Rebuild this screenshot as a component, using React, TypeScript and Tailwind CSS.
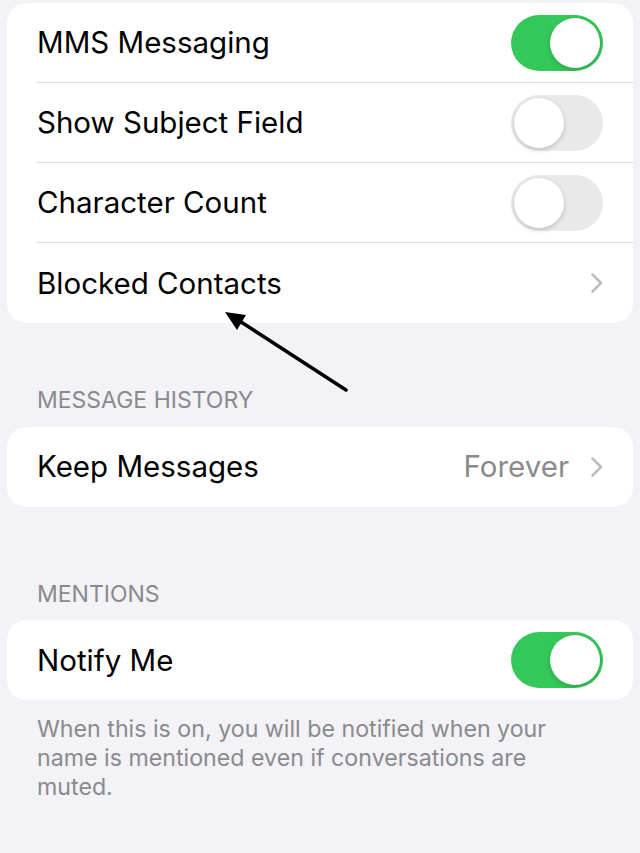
function Toggle({ on }: { on: boolean }) {
  return (
    <div
      className={`flex h-[56px] w-[92px] items-center rounded-full p-[3px] ${
        on ? 'justify-end bg-[#34c759]' : 'justify-start bg-[#e9e9ea]'
      }`}
    >
      <div className="h-[50px] w-[50px] rounded-full bg-white shadow-[0_2px_5px_rgba(0,0,0,0.18)]" />
    </div>
  );
}

function Row({
  label,
  last,
  children,
}: {
  label: string;
  last?: boolean;
  children?: React.ReactNode;
}) {
  return (
    <div className="pl-[30px]">
      <div
        className={`flex h-[80px] items-center justify-between pr-[30px] ${
          last ? '' : 'border-b border-[#dcdce0]'
        }`}
      >
        <span className="text-[29.5px] text-black">{label}</span>
        {children}
      </div>
    </div>
  );
}

const Chevron = () => (
  <svg width="14" height="22" viewBox="0 0 14 22" className="mr-[-1px]">
    <path d="M2.5 2.5 L11 11 L2.5 19.5" fill="none" stroke="#bdbdc1" strokeWidth="2.6" strokeLinecap="round" strokeLinejoin="round" />
  </svg>
);

export default function App() {
  return (
    <div
      className="relative min-h-[853px] bg-[#f2f2f7] px-[7px] pt-[3px]"
      style={{ fontFamily: 'Inter, "Noto Sans", sans-serif' }}
    >
      <div className="overflow-hidden rounded-[20px] bg-white">
        <Row label="MMS Messaging">
          <Toggle on />
        </Row>
        <Row label="Show Subject Field">
          <Toggle on={false} />
        </Row>
        <Row label="Character Count">
          <Toggle on={false} />
        </Row>
        <Row label="Blocked Contacts" last>
          <Chevron />
        </Row>
      </div>

      <div className="mt-[60px] px-[30px] pb-[9px] text-[23px] text-[#8a8a8e]">MESSAGE HISTORY</div>
      <div className="overflow-hidden rounded-[20px] bg-white">
        <Row label="Keep Messages" last>
          <div className="flex items-center gap-[21px]">
            <span className="text-[29.5px] text-[#8a8a8e]">Forever</span>
            <Chevron />
          </div>
        </Row>
      </div>

      <div className="mt-[70px] px-[30px] pb-[9px] text-[23px] text-[#8a8a8e]">MENTIONS</div>
      <div className="overflow-hidden rounded-[20px] bg-white">
        <Row label="Notify Me" last>
          <Toggle on />
        </Row>
      </div>
      <p className="mt-[15px] pl-[30px] pr-[40px] text-[23.2px] leading-[29px] text-[#8a8a8e]">
        When this is on, you will be notified when your name is mentioned even if conversations are
        muted.
      </p>

      <svg
        className="pointer-events-none absolute left-0 top-0"
        width="640"
        height="853"
        viewBox="0 0 640 853"
      >
        <line x1="346" y1="390" x2="238" y2="320" stroke="#000" strokeWidth="3.5" strokeLinecap="round" />
        <polygon points="225,312 246,315 237,330" fill="#000" />
      </svg>
    </div>
  );
}
